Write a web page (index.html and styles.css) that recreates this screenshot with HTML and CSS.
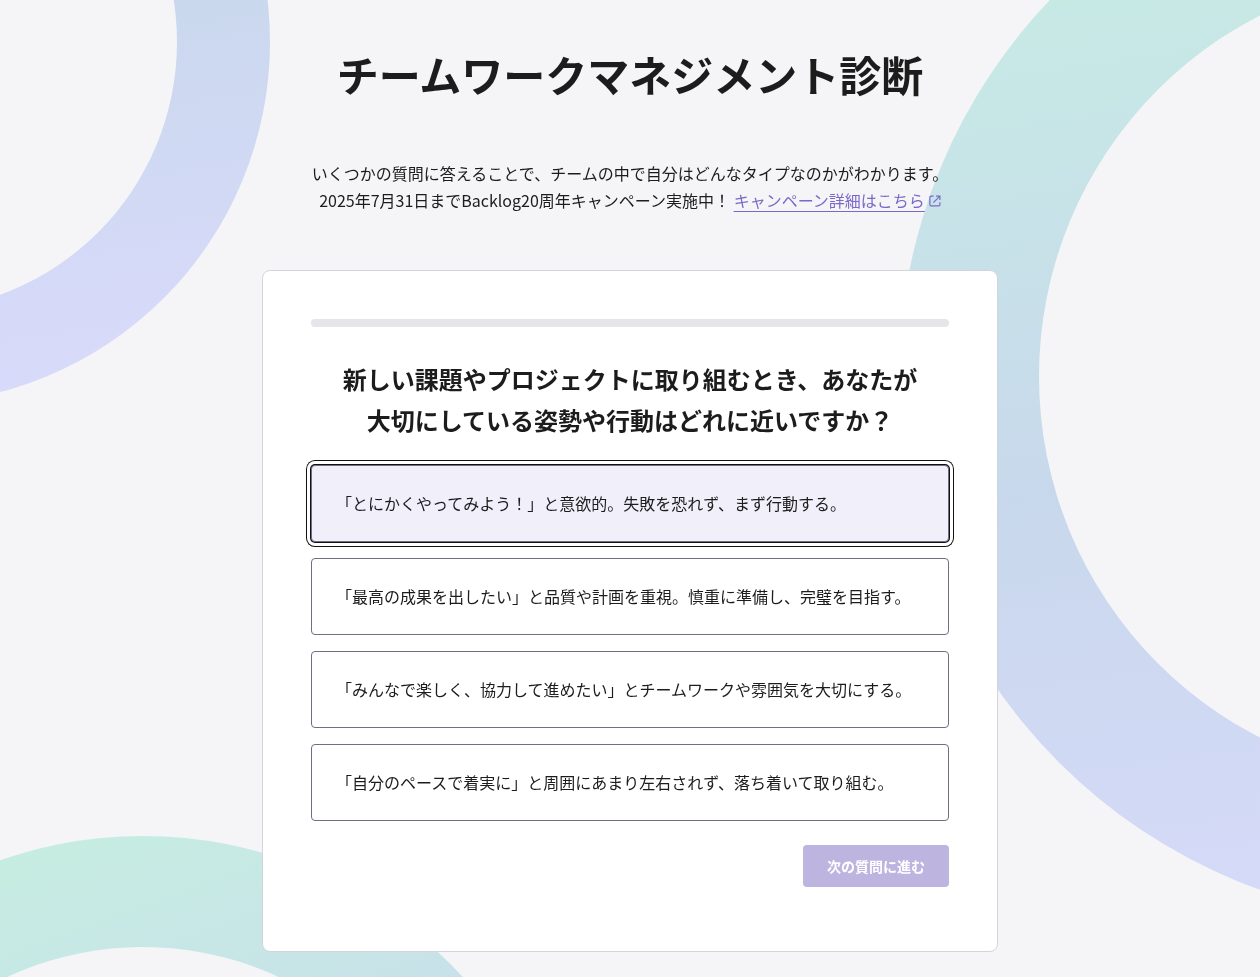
FILE: index.html
```html
<!DOCTYPE html>
<html lang="ja">
<head>
  <meta charset="UTF-8">
  <meta name="viewport" content="width=device-width, initial-scale=1.0">
  <title>チームワークマネジメント診断</title>
  <link rel="stylesheet" href="styles.css">
</head>
<body>
  <!-- Background rings -->
  <div class="rings" aria-hidden="true">
    <div class="ring ring-left"></div>
    <div class="ring ring-right"></div>
    <div class="ring ring-bottom"></div>
  </div>

  <main class="page">
    <h1>チームワークマネジメント診断</h1>

    <p class="intro">
      いくつかの質問に答えることで、チームの中で自分はどんなタイプなのかがわかります。<br>
      2025年7月31日までBacklog20周年キャンペーン実施中！
      <a href="#campaign"><span>キャンペーン詳細はこちら</span><svg width="12" height="12" viewBox="0 0 12 12" fill="none" stroke="currentColor" stroke-width="1.2" aria-hidden="true"><path d="M4.6 1.1H2a1.1 1.1 0 0 0-1.1 1.1v7.6A1.1 1.1 0 0 0 2 10.9h7.8a1.1 1.1 0 0 0 1.1-1.1V7.2"/><path d="M7 1.1h3.9V5M10.8 1.2 4.4 7.6"/></svg></a>
    </p>

    <!-- Question card -->
    <form class="card">
      <div class="progress" role="progressbar" aria-label="進捗" aria-valuemin="0" aria-valuemax="100" aria-valuenow="0"></div>

      <h2 id="question">新しい課題やプロジェクトに取り組むとき、あなたが<br>大切にしている姿勢や行動はどれに近いですか？</h2>

      <div class="options" role="radiogroup" aria-labelledby="question">
        <div class="option">
          <input type="radio" name="answer" id="answer1" checked>
          <label for="answer1">「とにかくやってみよう！」と意欲的。失敗を恐れず、まず行動する。</label>
        </div>
        <div class="option">
          <input type="radio" name="answer" id="answer2">
          <label for="answer2">「最高の成果を出したい」と品質や計画を重視。慎重に準備し、完璧を目指す。</label>
        </div>
        <div class="option">
          <input type="radio" name="answer" id="answer3">
          <label for="answer3">「みんなで楽しく、協力して進めたい」とチームワークや雰囲気を大切にする。</label>
        </div>
        <div class="option">
          <input type="radio" name="answer" id="answer4">
          <label for="answer4">「自分のペースで着実に」と周囲にあまり左右されず、落ち着いて取り組む。</label>
        </div>
      </div>

      <button type="submit" disabled>次の質問に進む</button>
    </form>
  </main>
</body>
</html>
```

FILE: styles.css
```css
* {
  box-sizing: border-box;
}

body {
  margin: 0;
  font-family: "Noto Sans CJK JP", sans-serif;
  font-size: 16px;
  line-height: 27px;
  color: #1c1c1c;
  background-color: #f5f5f8;
}

/* Background rings */
.rings {
  position: fixed;
  inset: 0;
  overflow: hidden;
  z-index: -1;
}

.ring {
  position: absolute;
  display: flex;
  border-radius: 50%;
  background-image: linear-gradient(172deg, #c6eee0 0%, #c7e7e6 22%, #c8d8ec 55%, #d9dafb 100%);
}

.ring::after {
  content: "";
  flex: 1;
  border-radius: 50%;
  background-color: #f5f5f8;
}

.ring-left {
  top: -320px;
  left: -454px;
  width: 724px;
  height: 724px;
  padding: 93px;
  background-image: linear-gradient(172deg, #c6eee0 0%, #c8d8ec 45%, #d9dafb 95%);
}

.ring-right {
  top: -169px;
  right: -730px;
  width: 1091px;
  height: 1091px;
  padding: 140px;
}

.ring-bottom {
  bottom: -725px;
  left: -290px;
  width: 866px;
  height: 866px;
  padding: 111px;
  background-image: linear-gradient(160deg, #c6eee0 8%, #c7e7e6 24%, #c8d8ec 55%, #d9dafb 100%);
}

/* Page */
.page {
  max-width: 768px;
  margin: 0 auto;
  padding: 48px 16px 24px;
}

h1 {
  margin: 0 0 60px;
  font-size: 42px;
  line-height: 52px;
  text-align: center;
}

.intro {
  margin: 0 0 56px;
  text-align: center;
}

.intro a {
  display: inline-flex;
  align-items: center;
  gap: 4px;
  color: #7b68c8;
  text-decoration: none;
}

.intro a span {
  text-decoration: underline;
  text-decoration-thickness: 1px;
  text-underline-offset: 4px;
}

/* Question card */
.card {
  display: flex;
  flex-direction: column;
  padding: 48px 48px 64px;
  background-color: #fff;
  border: 1px solid #d3d3db;
  border-radius: 8px;
}

.progress {
  height: 8px;
  border-radius: 4px;
  background-color: #e5e5ea;
}

h2 {
  margin: 31px 0 25px;
  font-size: 24px;
  line-height: 41px;
  text-align: center;
}

.options {
  display: grid;
  gap: 16px;
  margin-bottom: 24px;
}

.option {
  display: grid;
}

.option input,
.option label {
  grid-area: 1 / 1;
}

.option input {
  appearance: none;
  margin: 0;
}

.option label {
  padding: 24px;
  border: 1px solid #706d86;
  border-radius: 4px;
  cursor: pointer;
}

.option input:checked + label {
  background-color: #f1effa;
  box-shadow: 0 0 0 1px #111, 0 0 0 4px #fff, 0 0 0 5px #111;
}

button {
  align-self: flex-end;
  padding: 8px 24px;
  font-family: inherit;
  font-size: 14px;
  font-weight: bold;
  line-height: 26px;
  color: #fff;
  background-color: #bdb4e0;
  border: none;
  border-radius: 4px;
}
```
